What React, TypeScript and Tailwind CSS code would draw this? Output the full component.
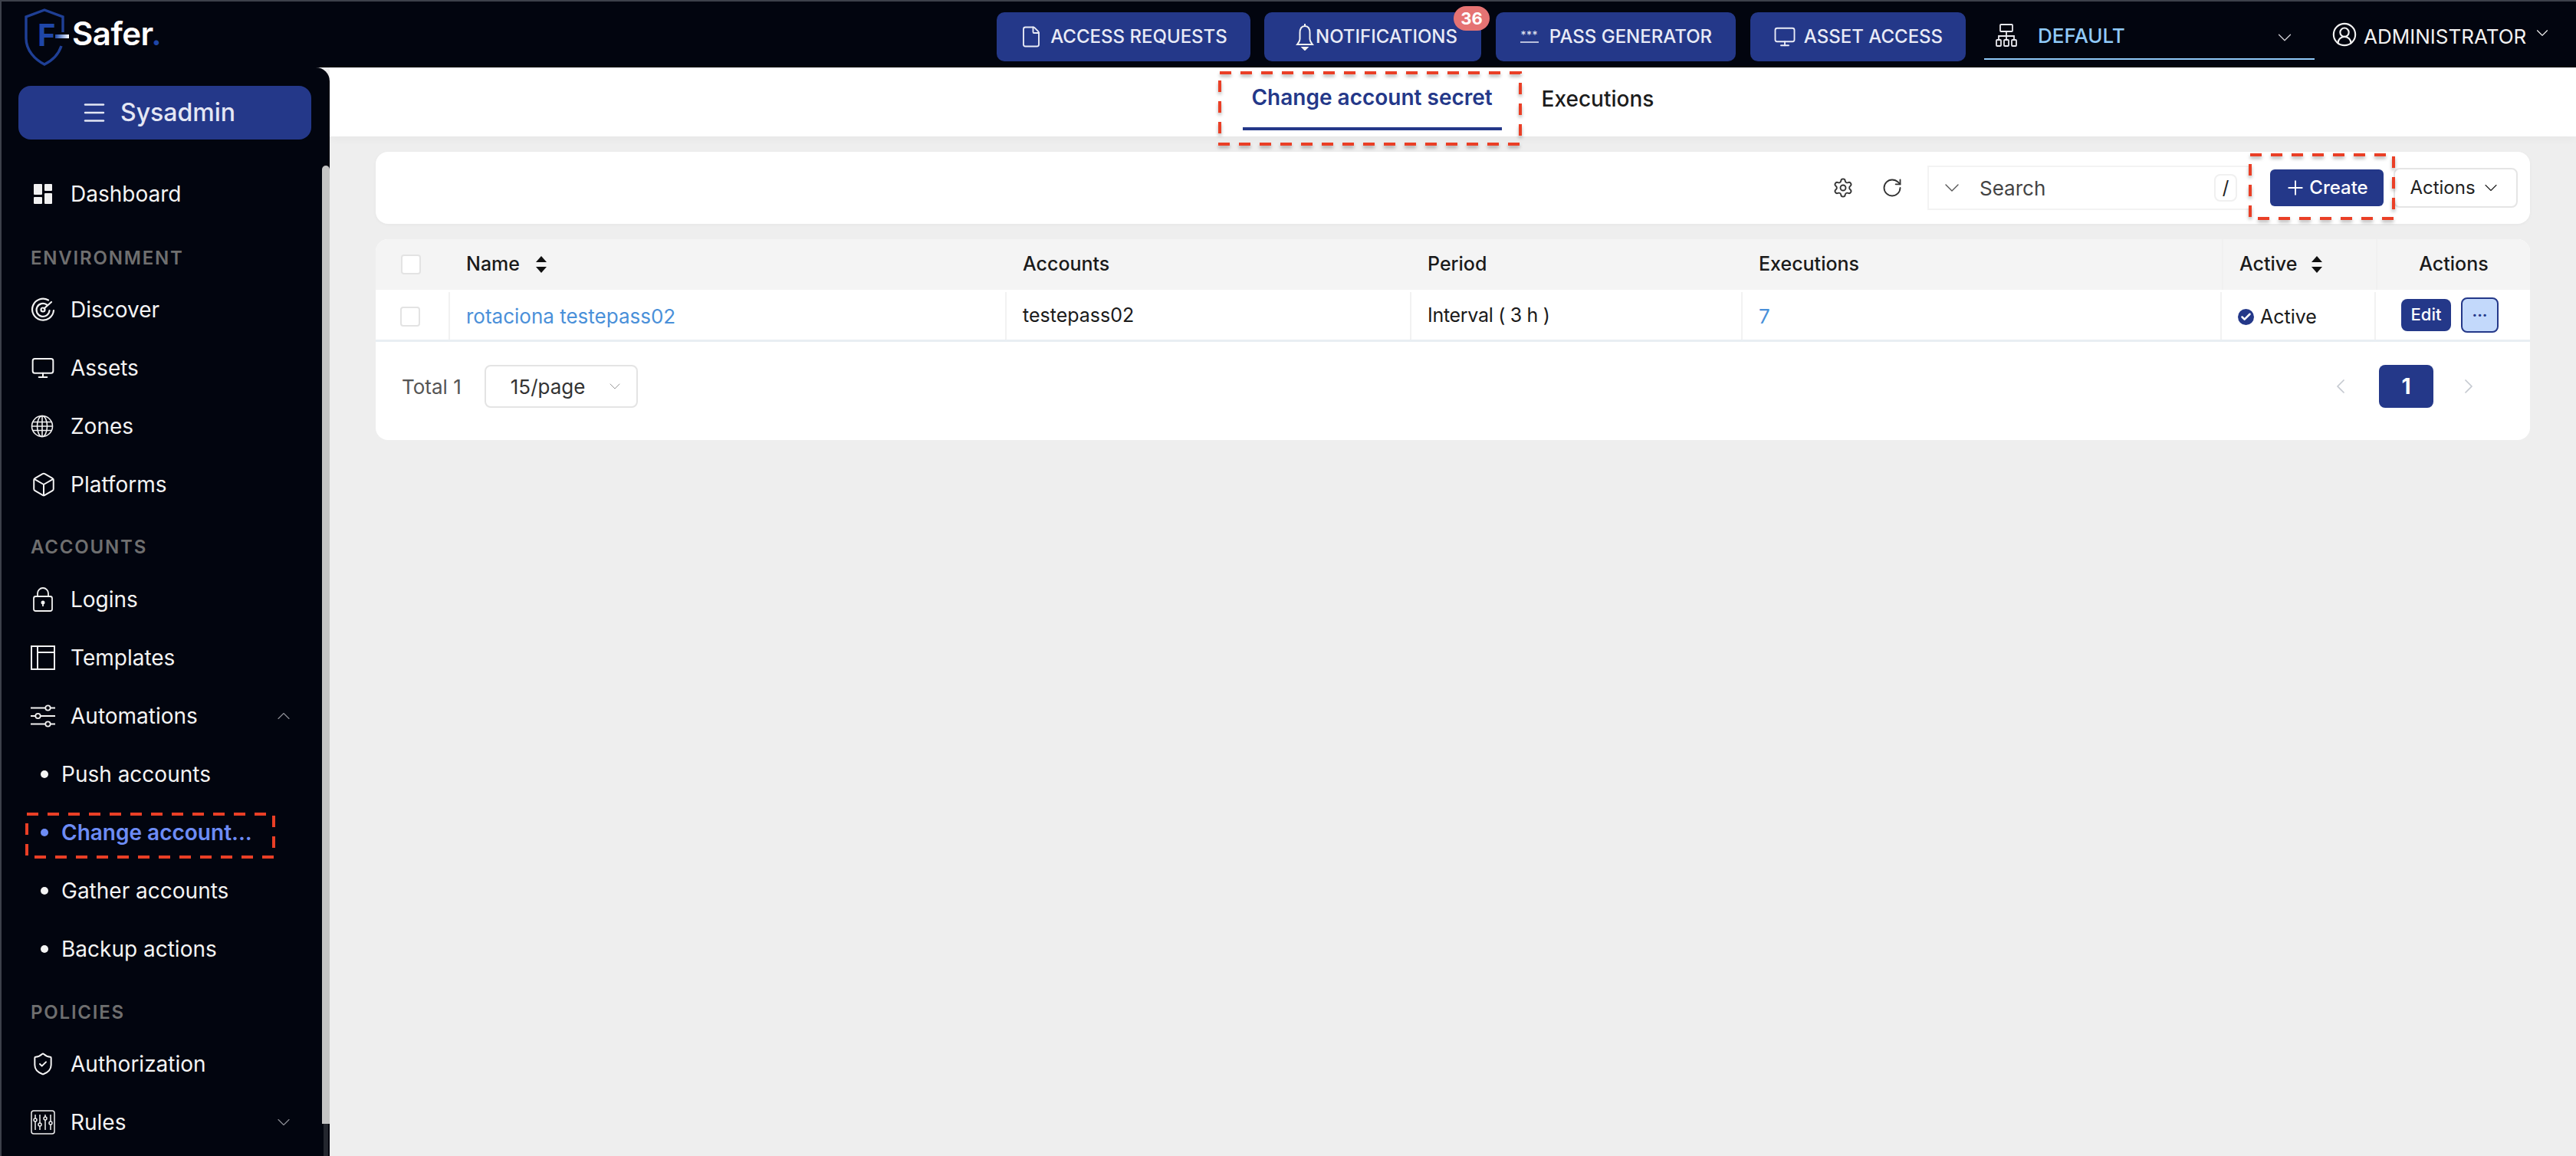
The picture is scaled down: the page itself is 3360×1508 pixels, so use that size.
import {
  Box,
  Check,
  ChevronDown,
  ChevronLeft,
  ChevronRight,
  ChevronUp,
  CircleUserRound,
  File,
  Menu,
  Monitor,
  Plus,
  RotateCw,
  Settings,
  ShieldCheck,
} from 'lucide-react';
import type { ReactNode } from 'react';

function DashboardIcon() {
  return (
    <svg width="32" height="32" viewBox="0 0 32 32" fill="#f1f1f1">
      <rect x="4" y="3" width="11" height="14" rx="1" />
      <rect x="18" y="3" width="10" height="9" rx="1" />
      <rect x="4" y="20" width="11" height="9" rx="1" />
      <rect x="18" y="15" width="10" height="14" rx="1" />
    </svg>
  );
}

function RadarIcon() {
  return (
    <svg width="32" height="32" viewBox="0 0 32 32" fill="none" stroke="#f1f1f1" strokeWidth="2.2" strokeLinecap="round">
      <path d="M23 3.5A14 14 0 1 0 30 17" />
      <path d="M21 9.5A8.5 8.5 0 1 0 24.5 17" />
      <circle cx="16" cy="16" r="2.5" />
      <path d="M17.5 14.5 L27 6" />
    </svg>
  );
}

function GlobeIcon() {
  return (
    <svg width="30" height="30" viewBox="0 0 30 30" fill="none" stroke="#f1f1f1" strokeWidth="1.6">
      <circle cx="15" cy="15" r="13.5" />
      <ellipse cx="15" cy="15" rx="6.5" ry="13.5" />
      <path d="M15 1.5V28.5M2.5 9.5H27.5M1.5 15H28.5M2.5 20.5H27.5" />
    </svg>
  );
}

function LockIcon() {
  return (
    <svg width="32" height="34" viewBox="0 0 32 34" fill="none" stroke="#f1f1f1" strokeWidth="1.8">
      <rect x="4" y="13" width="24" height="19" rx="2.5" />
      <path d="M9 13V9A7 7 0 0 1 23 9V13" />
      <circle cx="16" cy="21" r="1.6" fill="#f1f1f1" />
      <path d="M16 22V26" />
    </svg>
  );
}

function TemplateIcon() {
  return (
    <svg width="32" height="32" viewBox="0 0 32 32" fill="none" stroke="#f1f1f1" strokeWidth="2">
      <rect x="1" y="1" width="30" height="30" />
      <path d="M9 1V31M9 9H31" />
    </svg>
  );
}

function SlidersIcon() {
  return (
    <svg width="32" height="32" viewBox="0 0 32 32" fill="none" stroke="#f1f1f1" strokeWidth="1.8">
      <path d="M0 5.5H19M26 5.5H32M0 16H6M13 16H32M0 26.5H19M26 26.5H32" />
      <circle cx="22.5" cy="5.5" r="3.2" />
      <circle cx="9.5" cy="16" r="3.2" />
      <circle cx="22.5" cy="26.5" r="3.2" />
    </svg>
  );
}

function RulesIcon() {
  return (
    <svg width="32" height="32" viewBox="0 0 32 32" fill="none" stroke="#f1f1f1" strokeWidth="1.5">
      <rect x="1" y="1" width="30" height="30" rx="3" />
      <path d="M6 6V11M6 15V26M12 6V17M12 21V26M19 6V9M19 13V26M26 6V15M26 19V26" />
      <circle cx="6" cy="13" r="2" />
      <circle cx="12" cy="19" r="2" />
      <circle cx="19" cy="11" r="2" />
      <circle cx="26" cy="17" r="2" />
    </svg>
  );
}

function OrgIcon() {
  return (
    <svg width="28" height="30" viewBox="0 0 28 30" fill="none" stroke="#e8e8ee" strokeWidth="1.8">
      <rect x="6" y="1" width="16" height="9" rx="1" />
      <path d="M14 10V16M4 21V16H24V21M14 16V21" />
      <rect x="1" y="21" width="6" height="8" rx="1" />
      <rect x="11" y="21" width="6" height="8" rx="1" />
      <rect x="21" y="21" width="6" height="8" rx="1" />
    </svg>
  );
}

function SortIcon() {
  return (
    <svg width="16" height="24" viewBox="0 0 16 24" fill="#111">
      <path d="M8 1 15 9H1Z" />
      <path d="M8 23 1 15H15Z" />
    </svg>
  );
}

function KeyDashIcon() {
  return (
    <span className="flex w-[26px] flex-col items-center leading-none">
      <span className="h-[8px] text-[14px] font-normal leading-[12px] tracking-[0.5px]">***</span>
      <span className="mt-[6px] h-[2px] w-[24px] bg-[#b9bfdc]" />
    </span>
  );
}

function BellIcon() {
  return (
    <svg width="24" height="36" viewBox="0 0 24 36" fill="none" stroke="#f1f1f1" strokeWidth="2">
      <path d="M12 1V4" />
      <path d="M12 4C7 4 5.5 8 5.5 13V21C5.5 24 3.5 26 2 28H22C20.5 26 18.5 24 18.5 21V13C18.5 8 17 4 12 4Z" />
      <path d="M9 32H15L12 35Z" fill="#f1f1f1" />
    </svg>
  );
}

function TopButton({ className, icon, label, gap }: { className: string; icon: ReactNode; label: string; gap: string }) {
  return (
    <button className={`flex h-[64px] items-center justify-center rounded-[10px] bg-[#243889] text-[24px] font-medium text-[#e9ebf6] ${gap} ${className}`}>
      {icon}
      {label}
    </button>
  );
}

function NavItem({ icon, label, chevron }: { icon: ReactNode; label: string; chevron?: 'up' | 'down' }) {
  return (
    <div className="flex h-[76px] items-center pl-[38px] pr-[36px] text-[28px] font-normal text-[#f4f4f4]">
      <span className="flex w-[52px] shrink-0 items-center">{icon}</span>
      <span className="flex-1">{label}</span>
      {chevron === 'up' && <ChevronUp size={28} strokeWidth={1} color="#8b8d94" />}
      {chevron === 'down' && <ChevronDown size={28} strokeWidth={1} color="#8b8d94" />}
    </div>
  );
}

function SubItem({ label, active }: { label: string; active?: boolean }) {
  return (
    <div className={`flex h-[76px] items-center pl-[51px] text-[28px] ${active ? 'font-semibold text-[#6d8cf5]' : 'text-[#f4f4f4]'}`}>
      <span className={`mr-[17px] h-[10px] w-[10px] rounded-full ${active ? 'bg-[#6d8cf5]' : 'bg-[#f4f4f4]'}`} />
      {label}
    </div>
  );
}

function SectionLabel({ label, className }: { label: string; className: string }) {
  return (
    <div className={`pl-[38px] text-[24px] font-semibold leading-[30px] tracking-[1.8px] text-[#6f6f6f] ${className}`}>
      {label}
    </div>
  );
}

// red annotation boxes drawn on top of the screenshot
function DashedBox({ className, width, height, shadow }: { className: string; width: number; height: number; shadow?: boolean }) {
  return (
    <svg
      className={`absolute ${className} ${shadow ? 'drop-shadow-[0_3px_2px_rgba(0,0,0,0.3)]' : ''}`}
      width={width}
      height={height}
      viewBox={`0 0 ${width} ${height}`}
      fill="none"
    >
      <rect x="2" y="2" width={width - 4} height={height - 4} stroke="#ea3f26" strokeWidth="4" strokeDasharray="15 12" />
    </svg>
  );
}

function Checkbox({ className }: { className?: string }) {
  return <span className={`h-[26px] w-[26px] rounded-[4px] border-2 border-[#e3e3e3] bg-white ${className ?? ''}`} />;
}

export default function App() {
  return (
    <div className="relative flex h-[1508px] w-[3360px] flex-col overflow-hidden border-l-2 border-t-2 border-[#3d414b] bg-[#eeeeee] font-['Inter',sans-serif]">
      {/* top bar */}
      <header className="flex h-[86px] shrink-0 items-start bg-[#02050f] pt-[14px]">
        <div className="relative -mt-[6px] ml-[30px] flex h-[76px] w-[180px] shrink-0 items-center">
          <svg width="52" height="76" viewBox="0 0 52 76" fill="none" className="absolute left-0 top-0">
            <path d="M50 32V12L26 3 2 12V40C2 56 14 68 26 74 36 69 44 62 48 50" stroke="#1f3f95" strokeWidth="3.4" />
          </svg>
          <span className="absolute left-[17px] top-[12px] text-[40px] font-bold leading-[48px] text-[#1f46a8]">F</span>
          <span className="absolute left-[40px] top-[35px] h-[5px] w-[18px] bg-gradient-to-r from-[#1f46a8] to-white" />
          <span className="absolute left-[62px] top-[8px] whitespace-nowrap text-[42px] font-semibold leading-[52px] tracking-[-0.5px] text-white">
            Safer<span className="text-[#1f46a8]">.</span>
          </span>
        </div>
        <div className="ml-[1088px] flex h-[64px] items-center">
          <TopButton className="w-[331px]" gap="gap-[10px]" icon={<File size={30} strokeWidth={1.5} />} label="ACCESS REQUESTS" />
          <div className="relative ml-[18px]">
            <TopButton className="w-[283px] pl-[10px]" gap="gap-[2px]" icon={<BellIcon />} label="NOTIFICATIONS" />
            <span className="absolute right-[-11px] top-[-8px] flex h-[32px] w-[47px] items-center justify-center rounded-[16px] bg-[#e57373] text-[22px] font-bold text-white">
              36
            </span>
          </div>
          <TopButton className="ml-[19px] w-[313px]" gap="gap-[13px]" icon={<KeyDashIcon />} label="PASS GENERATOR" />
          <TopButton className="ml-[19px] w-[281px]" gap="gap-[10px]" icon={<Monitor size={30} strokeWidth={1.5} />} label="ASSET ACCESS" />
        </div>
        <div className="ml-[24px] flex h-[62px] w-[431px] items-center border-b-2 border-[#90caf9] pl-[15px] pr-[24px] text-[26px] font-medium text-[#90caf9]">
          <OrgIcon />
          <span className="ml-[27px] flex-1">DEFAULT</span>
          <ChevronDown size={30} strokeWidth={1} color="#d0d0d6" className="mt-[6px]" />
        </div>
        <div className="ml-[22px] flex h-[62px] items-start gap-[8px] pt-[12px] text-[26px] text-[#f2f2f2]">
          <CircleUserRound size={34} strokeWidth={1.5} />
          <span>ADMINISTRATOR</span>
          <ChevronDown size={26} strokeWidth={1} className="mt-[2px]" />
        </div>
      </header>

      <div className="flex min-h-0 flex-1">
        {/* left nav */}
        <aside className="relative z-10 flex w-[428px] shrink-0 rounded-tr-[18px] bg-[#02050f]">
          <div className="flex min-w-0 flex-1 flex-col pt-[24px]">
            <button className="ml-[22px] flex h-[70px] w-[382px] shrink-0 items-center justify-center gap-[16px] rounded-[16px] bg-[#243889] pr-[18px] text-[32px] font-medium text-[#e4e7f4]">
              <Menu size={36} strokeWidth={1.6} />
              Sysadmin
            </button>
            <div className="mt-[33px]">
              <NavItem icon={<DashboardIcon />} label="Dashboard" />
            </div>
            <SectionLabel label="ENVIRONMENT" className="mt-[31px]" />
            <div className="mt-[14px]">
              <NavItem icon={<RadarIcon />} label="Discover" />
              <NavItem icon={<Monitor size={32} strokeWidth={1.5} />} label="Assets" />
              <NavItem icon={<GlobeIcon />} label="Zones" />
              <NavItem icon={<Box size={34} strokeWidth={1.4} />} label="Platforms" />
            </div>
            <SectionLabel label="ACCOUNTS" className="mt-[29px]" />
            <div className="mt-[15px]">
              <NavItem icon={<LockIcon />} label="Logins" />
              <NavItem icon={<TemplateIcon />} label="Templates" />
              <NavItem icon={<SlidersIcon />} label="Automations" chevron="up" />
              <SubItem label="Push accounts" />
              <SubItem label="Change account..." active />
              <SubItem label="Gather accounts" />
              <SubItem label="Backup actions" />
            </div>
            <SectionLabel label="POLICIES" className="mt-[30px]" />
            <div className="mt-[14px]">
              <NavItem icon={<ShieldCheck size={32} strokeWidth={1.5} />} label="Authorization" />
              <NavItem icon={<RulesIcon />} label="Rules" chevron="down" />
            </div>
          </div>
          <div className="flex w-[10px] shrink-0 flex-col pt-[128px]">
            <div className="h-[1250px] rounded-t-[6px] bg-[#c4c4c4]" />
            <div className="ml-[2px] h-[42px] w-[6px] bg-[#23262e]" />
          </div>
        </aside>

        {/* page */}
        <main className="flex min-w-0 flex-1 flex-col">
          <div className="flex h-[90px] shrink-0 justify-center bg-white pr-[12px] text-[28px] shadow-[0_4px_10px_rgba(0,0,0,0.03)]">
            <div className="flex h-[82px] w-[338px] items-center justify-center border-b-4 border-[#243889] font-semibold text-[#243889]">
              Change account secret
            </div>
            <div className="ml-[52px] flex h-[82px] items-center font-medium text-[#1c1c1c]">Executions</div>
          </div>

          <div className="flex flex-col gap-[20px] px-[60px] pt-[20px]">
            {/* toolbar */}
            <div className="flex h-[94px] items-center justify-end rounded-[16px] bg-white pr-[16px] shadow-[0_1px_4px_rgba(0,0,0,0.04)]">
              <Settings size={28} strokeWidth={1.6} color="#333" />
              <RotateCw size={28} strokeWidth={1.6} color="#333" className="ml-[36px]" />
              <div className="ml-[32px] flex h-[58px] w-[420px] items-center border-2 border-r-0 border-[#f3f3f3] pl-[14px] text-[26px] text-[#444]">
                <ChevronDown size={32} strokeWidth={1} color="#555" />
                <span className="ml-[20px] flex-1">Search</span>
                <span className="mr-[16px] flex h-[36px] w-[30px] items-center justify-center rounded-[8px] border-2 border-[#f0f0f0] text-[24px] text-[#222]">
                  /
                </span>
              </div>
              <button className="ml-[27px] flex h-[48px] w-[148px] items-center justify-center gap-[3px] rounded-[6px] bg-[#243889] pr-[2px] text-[24px] font-medium text-white">
                <Plus size={30} strokeWidth={1.5} />
                Create
              </button>
              <button className="ml-[13px] flex h-[52px] w-[162px] items-center justify-center gap-[6px] rounded-[8px] border-2 border-[#e5e5e5] bg-white text-[24px] text-[#222]">
                Actions
                <ChevronDown size={28} strokeWidth={1} />
              </button>
            </div>

            {/* table */}
            <div className="h-[262px] overflow-hidden rounded-[16px] bg-white">
              <div className="grid h-[66px] grid-cols-[97px_726px_528px_432px_625px_201px_1fr] items-center bg-[#f4f4f4] text-[25px] font-medium text-[#1a1a1a]">
                <div className="flex justify-center pr-[6px]"><Checkbox /></div>
                <div className="flex items-center gap-[20px] pl-[21px]">Name <SortIcon /></div>
                <div className="pl-[21px]">Accounts</div>
                <div className="pl-[21px]">Period</div>
                <div className="pl-[21px]">Executions</div>
                <div className="flex h-full items-center gap-[18px] border-l-2 border-[#f0f0f0] pl-[21px]">Active <SortIcon /></div>
                <div className="flex h-full items-center justify-center border-l-2 border-[#f0f0f0]">Actions</div>
              </div>
              <div className="grid h-[68px] grid-cols-[97px_726px_528px_432px_625px_201px_1fr] border-b-3 border-[#e9eef3] pt-[3px] text-[25px] text-[#1a1a1a] [&>div]:flex [&>div]:items-center">
                <div className="justify-center border-r-2 border-[#f2f2f2] pr-[6px]"><Checkbox className="mt-[2px]" /></div>
                <div className="border-r-2 border-[#f2f2f2] pl-[21px] text-[26px] text-[#4a90d9]">rotaciona testepass02</div>
                <div className="border-r-2 border-[#f2f2f2] pl-[21px]">testepass02</div>
                <div className="border-r-2 border-[#f2f2f2] pl-[21px] tracking-[-0.3px]">Interval ( 3 h )</div>
                <div className="border-r-2 border-[#f2f2f2] pl-[21px] text-[26px] text-[#4a90d9]">7</div>
                <div className="gap-[8px] border-r-2 border-[#f2f2f2] pl-[21px] pt-[3px]">
                  <span className="flex h-[21px] w-[21px] items-center justify-center rounded-full bg-[#243889]">
                    <Check size={15} strokeWidth={4} color="white" />
                  </span>
                  Active
                </div>
                <div className="-mt-[3px] justify-center gap-[13px] pr-[8px]">
                  <button className="flex h-[42px] w-[65px] items-center justify-center rounded-[8px] bg-[#243889] text-[22px] font-medium text-white">
                    Edit
                  </button>
                  <button className="flex h-[46px] w-[49px] items-center justify-center rounded-[8px] border-2 border-[#243889] bg-[#c3d9fb] text-[20px] font-bold leading-none text-[#243889]">
                    ···
                  </button>
                </div>
              </div>
              <div className="flex h-[126px] items-center pb-[10px] pl-[34px] pr-[64px] text-[26px] text-[#555]">
                <span>Total 1</span>
                <div className="ml-[30px] flex h-[56px] w-[200px] items-center justify-between rounded-[8px] border-2 border-[#e4e4e4] pl-[32px] pr-[16px] text-[#333]">
                  15/page
                  <ChevronDown size={24} strokeWidth={1} color="#999" />
                </div>
                <div className="ml-auto flex items-center">
                  <ChevronLeft size={32} strokeWidth={1.3} color="#c5c9d0" />
                  <span className="ml-[34px] flex h-[56px] w-[71px] items-center justify-center rounded-[8px] bg-[#243889] text-[28px] font-bold text-white">
                    1
                  </span>
                  <ChevronRight size={32} strokeWidth={1.3} color="#c5c9d0" className="ml-[30px]" />
                </div>
              </div>
            </div>
          </div>
        </main>
      </div>

      <DashedBox className="left-[1587px] top-[91px] z-20" width={396} height={97} shadow />
      <DashedBox className="left-[2931px] top-[198px] z-20" width={191} height={87} shadow />
      <DashedBox className="left-[31px] top-[1058px] z-20" width={326} height={60} />
    </div>
  );
}
